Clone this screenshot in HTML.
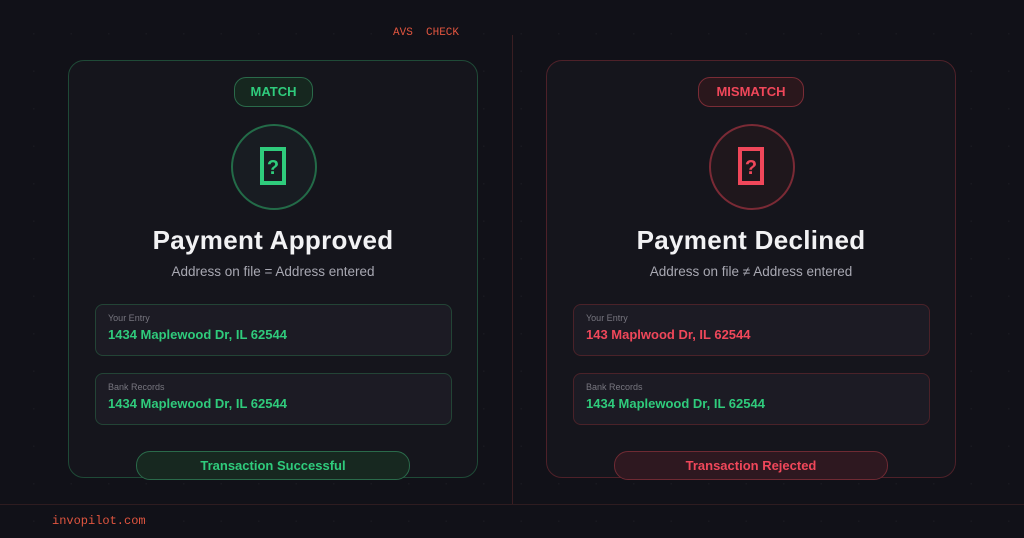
<!DOCTYPE html>
<html><head><meta charset="utf-8"><style>
*{margin:0;padding:0;box-sizing:border-box}
body{width:1024px;height:538px;background:#111118;font-family:"Liberation Sans",sans-serif;position:relative;overflow:hidden;
background-image:radial-gradient(circle,#191920 0.8px,transparent 1px);background-size:37.5px 37.5px;background-position:15px 15px}
.abs{position:absolute}
.card{position:absolute;top:60px;width:410px;height:418px;border-radius:16px;background:#15151c}
.g{border:1px solid #1f4a37}.r{border:1px solid #4e2129}
.badge{position:absolute;top:16px;height:30px;border-radius:12px;font-weight:bold;font-size:13px;line-height:28px;text-align:center}
.circ{position:absolute;top:63px;left:162px;width:86px;height:86px;border-radius:50%;background:#181c22}
.title{position:absolute;top:164px;width:100%;text-align:center;color:#f2f2f4;font-weight:bold;font-size:26px;letter-spacing:0.3px}
.sub{position:absolute;top:203px;width:100%;text-align:center;color:#a8a8b2;font-size:13.5px}
.field{position:absolute;left:26px;width:357px;height:52px;border-radius:8px;background:#1c1b24}
.field .l{position:absolute;left:12px;top:8px;font-size:9px;color:#77767f}
.field .v{position:absolute;left:12px;top:22px;font-size:13px;font-weight:bold}
.btn{position:absolute;top:390px;left:67px;width:274px;height:29px;border-radius:14px;text-align:center;line-height:27px;font-weight:bold;font-size:13px}
</style></head><body>
<div class="abs" style="left:393px;top:27px;font-family:'Liberation Mono',monospace;font-size:11px;color:#e0553f">AVS&nbsp;&nbsp;CHECK</div>
<div class="abs" style="left:512px;top:35px;width:1px;height:470px;background:#3a1e22"></div>
<div class="abs" style="left:0;top:504px;width:1024px;height:1px;background:#2e1c20"></div>
<div class="abs" style="left:52px;top:514px;font-family:'Liberation Mono',monospace;font-size:12px;color:#e0553f">invopilot.com</div>

<div class="card g" style="left:68px">
 <div class="badge" style="left:165px;width:79px;background:#16271f;border:1px solid #2a6a4a;color:#2fcb7c">MATCH</div>
 <div class="circ" style="border:2px solid #236b48"><svg width="82" height="82" viewBox="0 0 82 82"><rect x="29" y="23" width="22" height="34" fill="none" stroke="#2fcb7c" stroke-width="4"/><text x="40" y="48" text-anchor="middle" font-family="Liberation Sans" font-weight="bold" font-size="20" fill="#2fcb7c">?</text></svg></div>
 <div class="title">Payment Approved</div>
 <div class="sub">Address on file = Address entered</div>
 <div class="field" style="top:243px;border:1px solid #234436"><div class="l">Your Entry</div><div class="v" style="color:#2fcb7c">1434 Maplewood Dr, IL 62544</div></div>
 <div class="field" style="top:312px;border:1px solid #234436"><div class="l">Bank Records</div><div class="v" style="color:#2fcb7c">1434 Maplewood Dr, IL 62544</div></div>
 <div class="btn" style="background:#172820;border:1px solid #2a6a4a;color:#2fcb7c">Transaction Successful</div>
</div>

<div class="card r" style="left:546px">
 <div class="badge" style="left:151px;width:106px;background:#2a171c;border:1px solid #7a2c36;color:#f0475a">MISMATCH</div>
 <div class="circ" style="border:2px solid #7a2a35;background:#1f171c"><svg width="82" height="82" viewBox="0 0 82 82"><rect x="29" y="23" width="22" height="34" fill="none" stroke="#f0475a" stroke-width="4"/><text x="40" y="48" text-anchor="middle" font-family="Liberation Sans" font-weight="bold" font-size="20" fill="#f0475a">?</text></svg></div>
 <div class="title">Payment Declined</div>
 <div class="sub">Address on file ≠ Address entered</div>
 <div class="field" style="top:243px;border:1px solid #4a2229"><div class="l">Your Entry</div><div class="v" style="color:#f0475a">143 Maplwood Dr, IL 62544</div></div>
 <div class="field" style="top:312px;border:1px solid #4a2229"><div class="l">Bank Records</div><div class="v" style="color:#2fcb7c">1434 Maplewood Dr, IL 62544</div></div>
 <div class="btn" style="background:#2e1820;border:1px solid #6e2a33;color:#f0475a">Transaction Rejected</div>
</div>
</body></html>
